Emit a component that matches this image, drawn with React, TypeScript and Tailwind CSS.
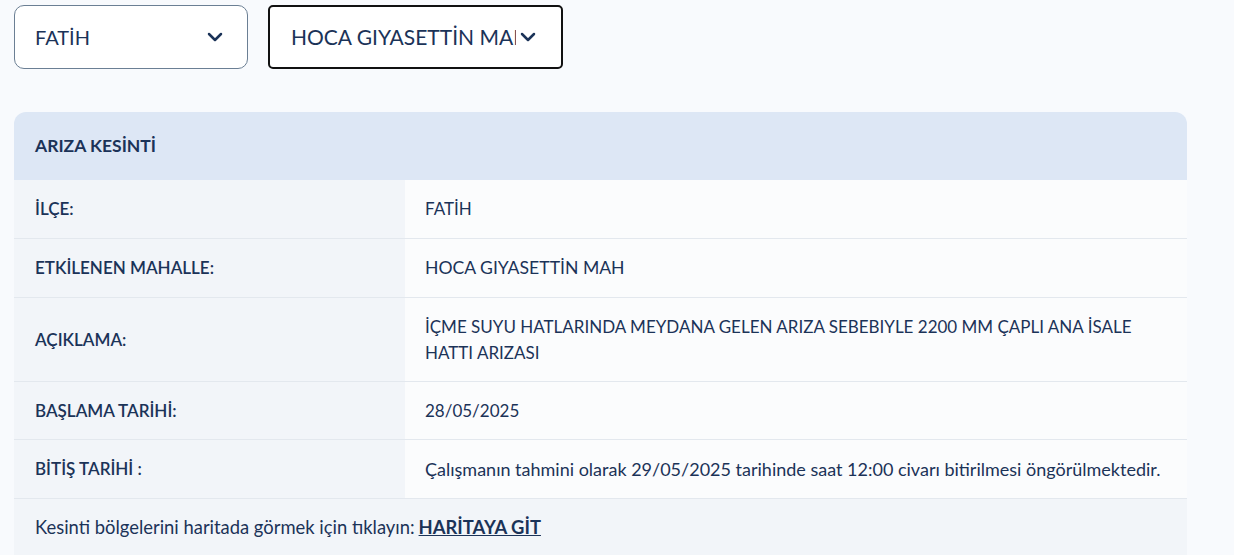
import React from "react";
import { FiChevronDown } from "react-icons/fi";

const rows = [
  { label: "İLÇE:", value: "FATİH", size: "text-[17px]", pb: "pb-4" },
  { label: "ETKİLENEN MAHALLE:", value: "HOCA GIYASETTİN MAH", size: "text-[17.6px]", pb: "pb-4" },
  {
    label: "AÇIKLAMA:",
    value: "İÇME SUYU HATLARINDA MEYDANA GELEN ARIZA SEBEBIYLE 2200 MM ÇAPLI ANA İSALE HATTI ARIZASI",
    size: "text-[17px]",
    pb: "pb-[15px]",
  },
  { label: "BAŞLAMA TARİHİ:", value: "28/05/2025", size: "text-[17px]", pb: "pb-[15px]" },
  {
    label: "BİTİŞ TARİHİ :",
    value: "Çalışmanın tahmini olarak 29/05/2025 tarihinde saat 12:00 civarı bitirilmesi öngörülmektedir.",
    size: "text-[18px]",
    pb: "pb-4",
  },
];

export default function App() {
  return (
    <div
      className="min-h-[555px] bg-[#f8fafd] text-[#1b3358] overflow-hidden"
      style={{ fontFamily: "Lato, 'Open Sans', sans-serif" }}
    >
      <div className="flex gap-5 pl-[14px] pt-[5px]">
        <div className="w-[234px] h-[64px] rounded-[10px] border border-[#6b7f94] bg-white flex items-center justify-between pl-5 pr-5">
          <span className="text-[20px]">FATİH</span>
          <FiChevronDown className="text-[24px] text-[#1b3358]" strokeWidth={2.5} />
        </div>
        <div className="w-[295px] h-[64px] rounded-[5px] border-2 border-[#111] bg-white flex items-center pl-[21px] pr-5">
          <span className="text-[21px] whitespace-nowrap overflow-hidden w-[225px]">HOCA GIYASETTİN MAH</span>
          <FiChevronDown className="text-[24px] text-[#1b3358] shrink-0" strokeWidth={2.5} />
        </div>
      </div>

      <div className="ml-[14px] mt-[43px] w-[1173px] rounded-t-[12px] overflow-hidden">
        <div className="h-[68px] bg-[#dde7f5] flex items-center pl-[21px] text-[17.5px] font-bold">
          ARIZA KESİNTİ
        </div>
        {rows.map((r, i) => (
          <div key={i} className="grid grid-cols-[391px_1fr] border-b border-[#e3e8ee] leading-[26px]">
            <div className={`bg-[#f2f5f9] pl-[21px] pt-4 ${r.pb} flex items-center text-[17px] font-semibold`}>
              {r.label}
            </div>
            <div className={`bg-[#fbfcfd] pl-5 pr-4 pt-4 ${r.pb} ${r.size}`}>{r.value}</div>
          </div>
        ))}
        <div className="bg-[#f2f5f9] h-[58px] flex items-center pl-[21px] text-[18.4px]">
          <span>Kesinti bölgelerini haritada görmek için tıklayın:</span>
          <a className="ml-1 font-bold underline">HARİTAYA GİT</a>
        </div>
      </div>
    </div>
  );
}
